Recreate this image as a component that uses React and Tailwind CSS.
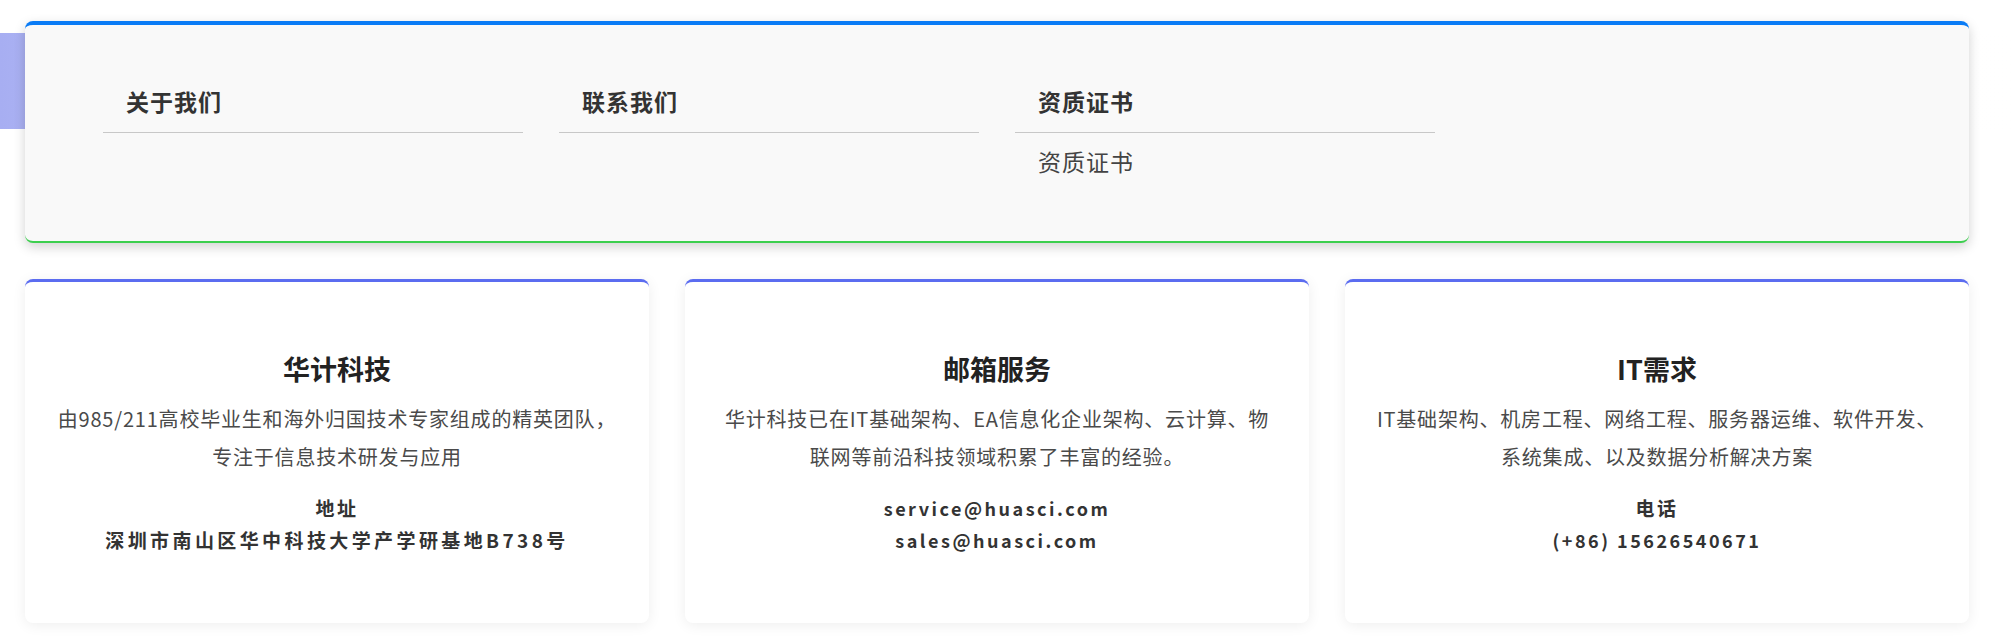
import React from 'react';

const columns = [
  { title: '关于我们', items: [] },
  { title: '联系我们', items: [] },
  { title: '资质证书', items: ['资质证书'] },
  null,
];

const cards = [
  {
    title: '华计科技',
    desc: ['由985/211高校毕业生和海外归国技术专家组成的精英团队，', '专注于信息技术研发与应用'],
    label: '地址',
    lines: ['深圳市南山区华中科技大学产学研基地B738号'],
  },
  {
    title: '邮箱服务',
    desc: ['华计科技已在IT基础架构、EA信息化企业架构、云计算、物', '联网等前沿科技领域积累了丰富的经验。'],
    label: null,
    lines: ['service@huasci.com', 'sales@huasci.com'],
  },
  {
    title: 'IT需求',
    desc: ['IT基础架构、机房工程、网络工程、服务器运维、软件开发、', '系统集成、以及数据分析解决方案'],
    label: '电话',
    lines: ['(+86) 15626540671'],
  },
];

const FooterNav = () => (
  <div className="relative z-10 w-[1944px] rounded-lg border-t-4 border-b-2 border-t-[#0a7cf6] border-b-[#3ccf4e] bg-[#f9f9f9] px-[78px] pt-[60px] pb-[63px] shadow-[0_4px_12px_rgba(0,0,0,0.18)]">
    <div className="grid grid-cols-4 gap-x-9">
      {columns.map((col, i) =>
        col ? (
          <div key={i}>
            <h3 className="border-b border-[#c8c8c8] px-[23px] pb-[14px] text-[23px] leading-[33px] font-bold tracking-[1px] text-[#333]">
              {col.title}
            </h3>
            <ul className="mt-[12px]">
              {col.items.map((it) => (
                <li key={it} className="px-[23px] text-[23px] leading-[33px] tracking-[1px] text-[#444]">
                  {it}
                </li>
              ))}
            </ul>
          </div>
        ) : (
          <div key={i} />
        )
      )}
    </div>
  </div>
);

const InfoCard = ({ card }) => {
  const isAddress = card.label === '地址';
  return (
    <div className="flex h-[344px] flex-col items-center justify-center rounded-lg border-t-[3px] border-[#5b6cf0] bg-white text-center shadow-[0_2px_14px_rgba(0,0,0,0.07)]">
      <h2 className="text-[27px] leading-[39px] font-bold text-[#222]">{card.title}</h2>
      <div className="mt-[12px] text-[20px] leading-[38px] tracking-[0.8px] text-[#4a4a4a]">
        {card.desc.map((d) => (
          <p key={d}>{d}</p>
        ))}
      </div>
      <div
        className={
          isAddress
            ? 'mt-[16px] text-[19px] leading-[32px] font-bold tracking-[3.4px] text-[#333]'
            : 'mt-[16px] text-[18px] leading-[32px] font-semibold tracking-[2.5px] text-[#333]'
        }
      >
        {card.label && <p className="font-bold tracking-[2.5px] text-[19px]">{card.label}</p>}
        {card.lines.map((l) => (
          <p key={l}>{l}</p>
        ))}
      </div>
    </div>
  );
};

export default function App() {
  return (
    <div
      className="relative min-h-[641px] bg-white pt-[21px] pl-[25px]"
      style={{ fontFamily: '"Noto Sans CJK SC", "Noto Sans", sans-serif' }}
    >
      {/* banner strip behind the nav panel */}
      <div className="absolute top-[33px] left-0 h-[96px] w-full bg-gradient-to-r from-[#a7aef2] via-[#fbfbfc] via-40% to-white" />
      <FooterNav />
      <div className="mt-[36px] grid w-[1944px] grid-cols-3 gap-x-9">
        {cards.map((c) => (
          <InfoCard key={c.title} card={c} />
        ))}
      </div>
    </div>
  );
}
